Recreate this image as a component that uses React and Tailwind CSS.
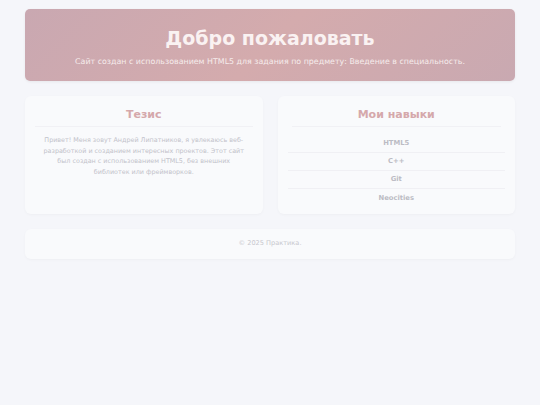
export default function App() {
  const skills = ['HTML5', 'C++', 'Git', 'Neocities'];

  return (
    <div className="min-h-[405px] bg-[#f5f6fa] px-[25px] pt-[9px] font-['DejaVu_Sans',sans-serif]">
      <header className="rounded-[5px] bg-[linear-gradient(135deg,#c9a8b1_0%,#d4abad_50%,#c9a9b1_100%)] h-[72px] pt-[5px] flex flex-col items-center justify-center shadow-[0_1px_3px_rgba(0,0,0,0.06)]">
        <h1 className="text-[19px] font-bold text-[#faf2f2] leading-none">Добро пожаловать</h1>
        <p className="mt-[10px] text-[7.9px] text-[#f6ecec] leading-none">
          Сайт создан с использованием HTML5 для задания по предмету: Введение в специальность.
        </p>
      </header>

      <main className="grid grid-cols-2 gap-[15px] mt-[15px]">
        <section className="bg-[#f9fafc] rounded-[6px] h-[118px] px-[10px] pt-[11px] shadow-[0_1px_3px_rgba(0,0,0,0.03)]">
          <h2 className="text-[11px] leading-[16px] font-bold text-[#d5a8ab] text-center pb-[3px] border-b border-[#f1f1f5]">Тезис</h2>
          <p className="mt-[8px] px-[4px] text-[6.4px] leading-[10.7px] text-[#c2c2ca] text-center">
            Привет! Меня зовут Андрей Липатников, я увлекаюсь веб-разработкой и созданием интересных проектов. Этот сайт был создан с использованием HTML5, без внешних библиотек или фреймворков.
          </p>
        </section>

        <section className="bg-[#f9fafc] rounded-[6px] h-[118px] px-[10px] pt-[11px] shadow-[0_1px_3px_rgba(0,0,0,0.03)]">
          <h2 className="text-[11px] leading-[16px] font-bold text-[#d5a8ab] text-center pb-[3px] border-b border-[#f1f1f5] mx-[4px]">Мои навыки</h2>
          <ul className="mt-[8px]">
            {skills.map((s, i) => (
              <li
                key={s}
                className={`h-[18px] flex items-center justify-center text-[6.8px] font-bold text-[#bcbcc4] ${i < skills.length - 1 ? 'border-b border-[#f0f0f4]' : ''}`}
              >
                {s}
              </li>
            ))}
          </ul>
        </section>
      </main>

      <footer className="mt-[15px] bg-[#f9fafc] rounded-[6px] h-[30px] flex items-center justify-center shadow-[0_1px_3px_rgba(0,0,0,0.03)]">
        <p className="text-[6.6px] text-[#c8c8ce]">© 2025 Практика.</p>
      </footer>
    </div>
  );
}
